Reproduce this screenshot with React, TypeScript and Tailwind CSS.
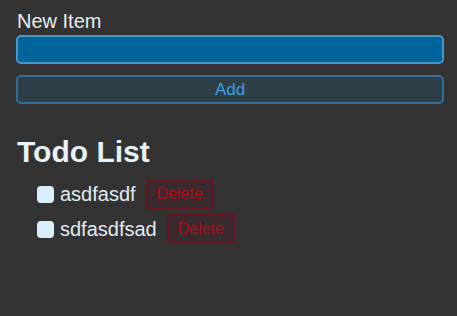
import React, { useState } from 'react';

interface Todo {
  id: number;
  text: string;
  done: boolean;
}

export default function App() {
  const [newItem, setNewItem] = useState('');
  const [todos, setTodos] = useState<Todo[]>([
    { id: 1, text: 'asdfasdf', done: false },
    { id: 2, text: 'sdfasdfsad', done: false },
  ]);

  const handleAdd = (e: React.FormEvent) => {
    e.preventDefault();
    if (!newItem.trim()) return;
    setTodos([...todos, { id: Date.now(), text: newItem, done: false }]);
    setNewItem('');
  };

  const toggle = (id: number) =>
    setTodos(todos.map((t) => (t.id === id ? { ...t, done: !t.done } : t)));

  const remove = (id: number) => setTodos(todos.filter((t) => t.id !== id));

  return (
    <div className="min-h-[316px] bg-[#333333] pl-4 pr-[13px] pt-[10px] font-['Liberation_Sans',Arial,sans-serif] text-[#e6edf1]">
      <form onSubmit={handleAdd} className="flex flex-col">
        <label htmlFor="item" className="ml-[1px] text-[20px] leading-[23px]">
          New Item
        </label>
        <input
          id="item"
          value={newItem}
          onChange={(e) => setNewItem(e.target.value)}
          autoFocus
          className="mt-[2px] h-[29px] w-full rounded-[5px] border-2 border-[#4596cb] bg-[#00639a] px-[9px] text-[16px] text-white outline-none caret-[#8cc8ee]"
        />
        <button
          type="submit"
          className="mt-[11px] h-[29px] w-full rounded-[5px] border-2 border-[#2f6f98] bg-[#2f3f47] text-[17px] text-[#3d9ee0]"
        >
          Add
        </button>
      </form>

      {/* Todo list */}
      <h1 className="mt-[31px] ml-[1px] text-[30px] font-bold leading-[34px] text-[#e8f1f6]">Todo List</h1>
      <ul className="mt-[10px] ml-[21px] flex flex-col gap-[5px]">
        {todos.map((todo) => (
          <li key={todo.id} className="flex h-[30px] items-center">
            <label className="flex items-center gap-[6px]">
              <input
                type="checkbox"
                checked={todo.done}
                onChange={() => toggle(todo.id)}
                className="h-[17px] w-[17px] appearance-none rounded-[4px] bg-[#d8eefa]"
              />
              <span className="text-[20px] leading-[23px] text-[#e2eaef]">{todo.text}</span>
            </label>
            <button
              onClick={() => remove(todo.id)}
              className="ml-[10px] h-[30px] rounded-[3px] border-2 border-[#6a1422] bg-[#3b2a2d] px-[9px] text-[16px] text-[#a8101e]"
            >
              Delete
            </button>
          </li>
        ))}
      </ul>
    </div>
  );
}
